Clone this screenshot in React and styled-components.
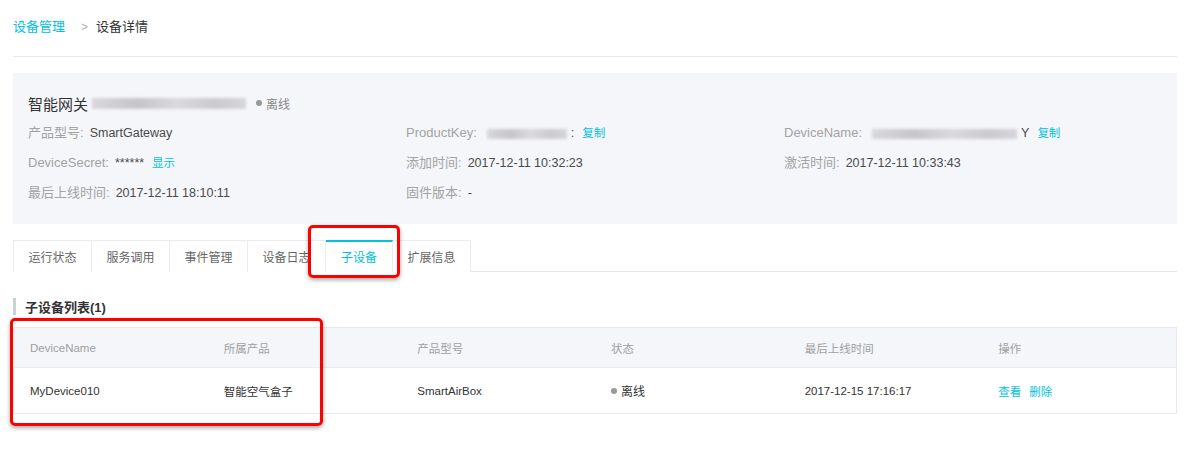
import styled, { createGlobalStyle } from "styled-components";

const GlobalStyle = createGlobalStyle`
  body {
    margin: 0;
    background: #ffffff;
    font-family: "Liberation Sans", Arial, "Noto Sans CJK SC", sans-serif;
  }
`;

const infoRows = [
  [
    { label: "产品型号:", value: "SmartGateway" },
    { label: "ProductKey:", blur: 80, tail: ":", link: "复制" },
    { label: "DeviceName:", blur: 145, tail: "Y", link: "复制" },
  ],
  [
    { label: "DeviceSecret:", value: "******", link: "显示" },
    { label: "添加时间:", value: "2017-12-11 10:32:23" },
    { label: "激活时间:", value: "2017-12-11 10:33:43" },
  ],
  [
    { label: "最后上线时间:", value: "2017-12-11 18:10:11" },
    { label: "固件版本:", value: "-" },
    null,
  ],
];

const tabs = ["运行状态", "服务调用", "事件管理", "设备日志", "子设备", "扩展信息"];
const columns = ["DeviceName", "所属产品", "产品型号", "状态", "最后上线时间", "操作"];

export default function App() {
  return (
    <>
      <GlobalStyle />
      <Page>
        <Breadcrumb>
          <Crumb $link>设备管理</Crumb>
          <Sep>&gt;</Sep>
          <Crumb>设备详情</Crumb>
        </Breadcrumb>

        <Panel>
          <Title>
            智能网关
            <Blur $w={154} $h={11} />
            <Status $small>离线</Status>
          </Title>
          <InfoGrid>
            {infoRows.flat().map((item, i) =>
              item ? (
                <InfoItem key={i}>
                  <Label>{item.label}</Label>
                  {item.value && <Value>{item.value}</Value>}
                  {item.blur && <Blur $w={item.blur} $h={10} />}
                  {item.tail && <Value>{item.tail}</Value>}
                  {item.link && <Link>{item.link}</Link>}
                </InfoItem>
              ) : (
                <InfoItem key={i} />
              )
            )}
          </InfoGrid>
        </Panel>

        <Tabs>
          {tabs.map((t) => (
            <Tab key={t} $active={t === "子设备"}>
              {t}
            </Tab>
          ))}
        </Tabs>

        <SectionTitle>子设备列表(1)</SectionTitle>

        <Table>
          <HeadRow>
            {columns.map((c) => (
              <Cell key={c}>{c}</Cell>
            ))}
          </HeadRow>
          <BodyRow>
            <Cell>MyDevice010</Cell>
            <Cell>智能空气盒子</Cell>
            <Cell>SmartAirBox</Cell>
            <Cell>
              <Status>离线</Status>
            </Cell>
            <Cell>2017-12-15 17:16:17</Cell>
            <Cell>
              <Link>查看</Link>
              <Link>删除</Link>
            </Cell>
          </BodyRow>
        </Table>

        <Mark $top={225} $left={308} $w={92} $h={53} />
        <Mark $top={318} $left={10} $w={313} $h={108} />
      </Page>
    </>
  );
}

const Page = styled.div`
  position: relative;
  padding: 0 14px 40px 13px;
`;

const Breadcrumb = styled.div`
  height: 57px;
  display: flex;
  align-items: flex-start;
  padding-top: 19px;
  line-height: 16px;
  border-bottom: 1px solid #ebebeb;
  font-size: 13px;
  box-sizing: border-box;
`;

const Crumb = styled.span`
  color: ${(p) => (p.$link ? "#00c1de" : "#333333")};
`;

const Sep = styled.span`
  color: #b0b0b0;
  font-size: 12px;
  margin: 0 8px 0 16px;
`;

const Panel = styled.div`
  margin-top: 16px;
  background: #f5f6fa;
  padding: 20px 15px 16px;
`;

const Title = styled.div`
  display: flex;
  align-items: center;
  height: 20px;
  font-size: 15px;
  color: #333333;
  font-family: "Noto Sans CJK SC", sans-serif;
  margin-bottom: 5px;
`;

const Blur = styled.span`
  display: inline-block;
  vertical-align: middle;
  width: ${(p) => p.$w}px;
  height: ${(p) => p.$h}px;
  margin: 0 4px;
  background: linear-gradient(90deg, #d8d8dc, #c6c6ca 30%, #dadade 55%, #cbcbcf 80%, #d6d6da);
  filter: blur(1.5px);
`;

const InfoGrid = styled.div`
  display: grid;
  grid-template-columns: repeat(3, 1fr);
  grid-auto-rows: 30px;
`;

const InfoItem = styled.div`
  line-height: 30px;
  white-space: nowrap;
  font-size: 12.5px;
`;

const Label = styled.span`
  color: #a3a3a3;
  font-size: 13px;
  margin-right: 6px;
`;

const Value = styled.span`
  color: #4a4a4a;
`;

const Link = styled.span`
  color: #00c1de;
  font-size: 11.5px;
  margin-left: 8px;
  &:first-child {
    margin-left: 0;
  }
`;

const Status = styled.span`
  display: inline-flex;
  align-items: center;
  font-size: 12px;
  color: ${(p) => (p.$small ? "#888888" : "#333333")};
  margin-left: ${(p) => (p.$small ? "6px" : "0")};
  &::before {
    content: "";
    width: 6px;
    height: 6px;
    border-radius: 50%;
    background: #999999;
    margin-right: 4px;
  }
`;

const Tabs = styled.div`
  margin-top: 16px;
  display: flex;
  height: 32px;
  box-sizing: border-box;
  border-bottom: 1px solid #e6e6e6;
`;

const Tab = styled.div`
  display: flex;
  align-items: center;
  padding: 0 ${(p) => (p.$active ? "15px" : "14.5px")};
  height: 32px;
  box-sizing: border-box;
  font-size: 12px;
  color: ${(p) => (p.$active ? "#00c1de" : "#666666")};
  background: #ffffff;
  border: 1px solid #ececec;
  border-left: none;
  border-top: ${(p) => (p.$active ? "2px solid #00c1de" : "1px solid #ececec")};
  border-bottom: ${(p) => (p.$active ? "1px solid #ffffff" : "none")};
  &:first-child {
    border-left: 1px solid #ececec;
  }
`;

const SectionTitle = styled.div`
  margin-top: 26px;
  height: 17px;
  display: flex;
  align-items: center;
  border-left: 3px solid #c9d1d9;
  padding-left: 9px;
  font-size: 13px;
  font-weight: bold;
  color: #333333;
`;

const Table = styled.div`
  margin-top: 12px;
  border: 1px solid #e9e9e9;
`;

const HeadRow = styled.div`
  display: grid;
  grid-template-columns: repeat(6, 1fr);
  height: 39px;
  align-items: center;
  background: #f5f6fa;
  color: #a0a0a0;
  font-size: 11.5px;
`;

const BodyRow = styled.div`
  display: grid;
  grid-template-columns: repeat(6, 1fr);
  height: 45px;
  align-items: center;
  border-top: 1px solid #ececec;
  color: #333333;
  font-size: 11.5px;
`;

const Cell = styled.div`
  padding-left: 16px;
  display: flex;
  align-items: center;
`;

const Mark = styled.div`
  position: absolute;
  top: ${(p) => p.$top}px;
  left: ${(p) => p.$left}px;
  width: ${(p) => p.$w}px;
  height: ${(p) => p.$h}px;
  box-sizing: border-box;
  border: 3px solid #ff0000;
  border-radius: 5px;
  box-shadow: 0 2px 4px rgba(0, 0, 0, 0.35);
  pointer-events: none;
`;
